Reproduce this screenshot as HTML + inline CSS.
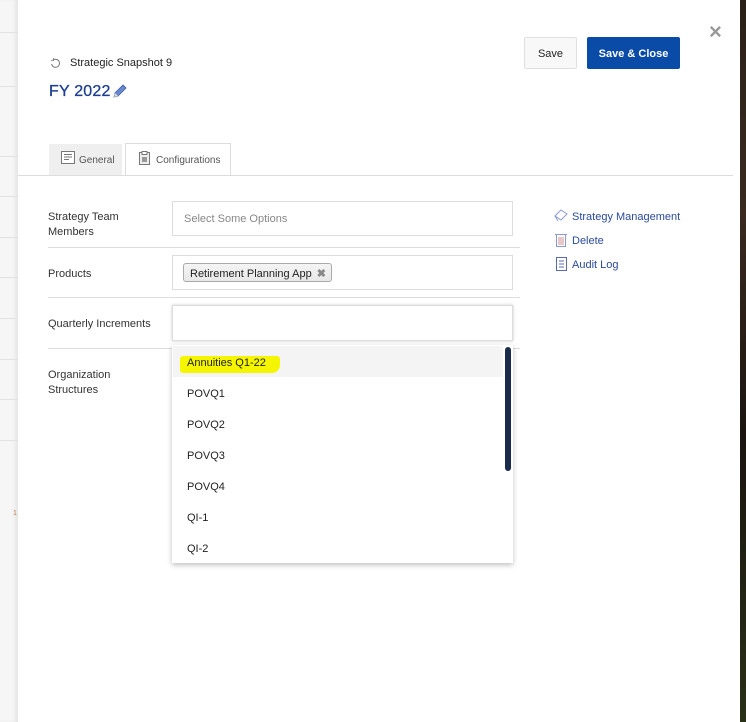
<!DOCTYPE html>
<html><head><meta charset="utf-8"><style>
*{box-sizing:border-box;margin:0;padding:0}
body{width:746px;height:722px;overflow:hidden;position:relative;background:#fff;font-family:"Liberation Sans",sans-serif;font-size:11px;color:#222}
.a{position:absolute}
.strip{left:0;top:0;width:18px;height:722px;background:#f6f6f6;box-shadow:inset -4px 0 5px -2px #e0e0e0}
.hl{left:0;width:18px;height:1px;background:#e2e2e2}
.dark{left:740px;top:0;width:6px;height:722px;background:linear-gradient(#2a2018,#3a2a20 30%,#1a1410 60%,#2a3018)}
.btn{top:37px;height:32px;border-radius:2px;display:flex;align-items:center;justify-content:center;font-size:11px;padding-top:1px}
.lab{left:48px;font-size:11px;color:#333;line-height:15px}
.fld{left:172px;width:341px;border:1px solid #ddd;background:#fff}
.sep{left:48px;width:472px;height:1px;background:#ddd}
.item{left:187px;font-size:11px;color:#222;line-height:14px}
.lnk{left:572px;color:#2a4a9a;font-size:11px}
</style></head><body>
<div class="a strip"></div>
<div class="a hl" style="top:32px"></div><div class="a hl" style="top:86px"></div><div class="a hl" style="top:156px"></div><div class="a hl" style="top:196px"></div><div class="a hl" style="top:237px"></div><div class="a hl" style="top:277px"></div><div class="a hl" style="top:318px"></div><div class="a hl" style="top:359px"></div><div class="a hl" style="top:399px"></div><div class="a hl" style="top:440px"></div>
<div class="a" style="left:13px;top:510px;font-size:7px;color:#c08040">1</div>
<div class="a dark"></div>

<div class="a" style="left:709px;top:20px;font-size:22px;font-weight:bold;color:#999;line-height:24px">×</div>
<div class="a btn" style="left:524px;width:53px;background:#f8f8f8;border:1px solid #e0e0e0;color:#222">Save</div>
<div class="a btn" style="left:587px;width:93px;background:#0a4ba8;color:#fff;font-weight:bold">Save &amp; Close</div>

<svg class="a" style="left:50px;top:58px" width="11" height="11" viewBox="0 0 11 11"><path d="M3 2.2A4 4 0 1 1 1.6 6" fill="none" stroke="#777" stroke-width="1"/><path d="M1 2.5h2.5V0" fill="none" stroke="#777" stroke-width="0.8"/></svg>
<div class="a" style="left:70px;top:57px;font-size:11px;color:#222">Strategic Snapshot 9</div>
<div class="a" style="left:49px;top:83px;font-size:16px;color:#1d3e8f;letter-spacing:0.2px;-webkit-text-stroke:0.3px #1d3e8f">FY 2022</div>
<svg class="a" style="left:112px;top:83px" width="16" height="16" viewBox="0 0 16 16"><path d="M2 14l1-4 8-8 3 3-8 8z" fill="#6a8ad0" stroke="#3a5aa0" stroke-width="0.8"/><path d="M2 14l1-4 3 3z" fill="#ddd"/></svg>

<div class="a" style="left:49px;top:144px;width:73px;height:31px;background:#efefef"></div>
<svg class="a" style="left:61px;top:151px" width="14" height="13" viewBox="0 0 14 13"><rect x="0.5" y="0.5" width="13" height="12" fill="#fff" stroke="#777"/><path d="M3 3.5h8M3 6h8M3 8.5h5" stroke="#777"/></svg>
<div class="a" style="left:79px;top:155px;font-size:10px;color:#555">General</div>
<div class="a" style="left:125px;top:143px;width:106px;height:33px;background:#fff;border:1px solid #ddd;border-bottom:none"></div>
<svg class="a" style="left:139px;top:151px" width="11" height="14" viewBox="0 0 11 14"><rect x="0.5" y="1.5" width="10" height="12" fill="#eee" stroke="#777"/><rect x="3" y="0.5" width="5" height="3" fill="#fff" stroke="#777"/><rect x="3" y="6" width="5" height="5" fill="#999"/></svg>
<div class="a" style="left:156px;top:155px;font-size:10px;color:#555">Configurations</div>
<div class="a" style="left:18px;top:175px;width:715px;height:1px;background:#ddd"></div>

<div class="a lab" style="top:210px">Strategy Team<br>Members</div>
<div class="a fld" style="top:201px;height:35px"></div>
<div class="a" style="left:184px;top:213px;color:#888">Select Some Options</div>
<div class="a sep" style="top:247px"></div>

<div class="a lab" style="top:267px">Products</div>
<div class="a fld" style="top:255px;height:35px"></div>
<div class="a" style="left:183px;top:263px;width:149px;height:19px;border:1px solid #aaa;border-radius:3px;background:linear-gradient(#f4f4f4,#e8e8e8);padding:3px 0 0 6px;color:#222">Retirement Planning App <span style="color:#888;font-weight:bold;margin-left:2px">✖</span></div>
<div class="a sep" style="top:297px"></div>

<div class="a lab" style="top:317px">Quarterly Increments</div>
<div class="a fld" style="top:305px;height:36px;box-shadow:0 0 3px #ccc"></div>
<div class="a sep" style="top:348px"></div>

<div class="a lab" style="top:368px">Organization<br>Structures</div>

<div class="a" style="left:172px;top:345px;width:341px;height:218px;background:#fff;box-shadow:0 2px 5px rgba(0,0,0,.25)"></div>
<div class="a" style="left:173px;top:346px;width:330px;height:31px;background:#f4f4f4"></div>
<div class="a" style="left:180px;top:356px;width:100px;height:17px;background:#f5f500;border-radius:3px 3px 8px 3px"></div>
<div class="a" style="left:505px;top:347px;width:6px;height:124px;background:#1b2b4b;border-radius:3px"></div>
<div class="a item" style="top:356px">Annuities Q1-22</div>
<div class="a item" style="top:387px">POVQ1</div>
<div class="a item" style="top:418px">POVQ2</div>
<div class="a item" style="top:449px">POVQ3</div>
<div class="a item" style="top:480px">POVQ4</div>
<div class="a item" style="top:511px">QI-1</div>
<div class="a item" style="top:542px">QI-2</div>

<svg class="a" style="left:554px;top:209px" width="14" height="13" viewBox="0 0 14 13"><path d="M1 7l6-6 6 4-6 6z" fill="#fff" stroke="#8a9ad0"/><path d="M1 7l3 5" stroke="#8a9ad0"/></svg>
<div class="a lnk" style="top:211px">Strategy Management</div>
<svg class="a" style="left:555px;top:233px" width="12" height="14" viewBox="0 0 12 14"><path d="M0 1.5h12M1.5 2v11.5h9V2" fill="#fff" stroke="#8a9ad0"/><path d="M4 4v8M6 4v8M8 4v8" stroke="#d09090"/></svg>
<div class="a lnk" style="top:235px">Delete</div>
<svg class="a" style="left:556px;top:257px" width="11" height="14" viewBox="0 0 11 14"><rect x="0.5" y="0.5" width="10" height="13" fill="#fff" stroke="#5a6ab0"/><path d="M3 4h5M3 7h5M3 10h5" stroke="#5a6ab0"/></svg>
<div class="a lnk" style="top:259px">Audit Log</div>
</body></html>
